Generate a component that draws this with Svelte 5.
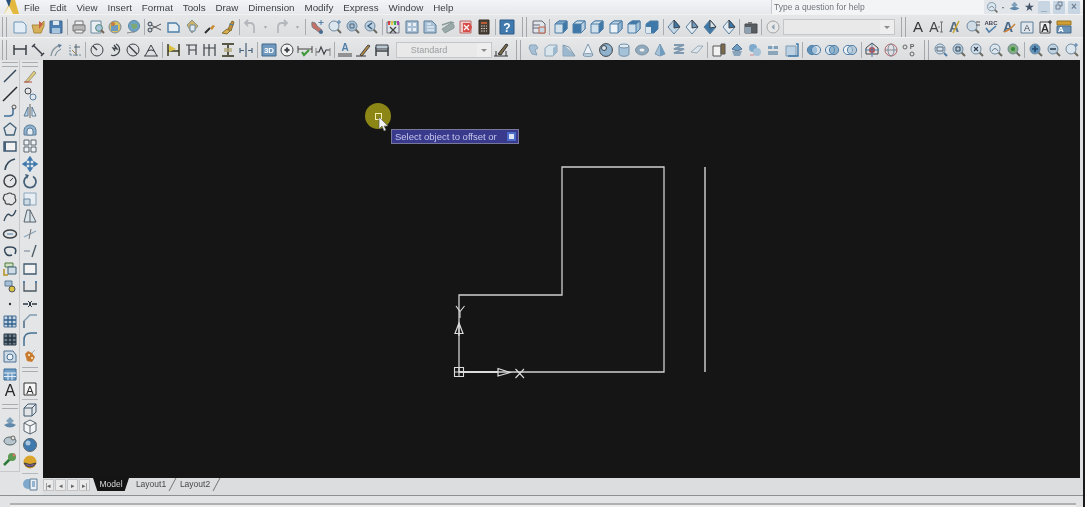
<script>
  const ink = '#3d4248';
  const blue = '#4f7fa8';

  // small builders for the families of look-alike toolbar icons
  const mag = (fill, extra = '') =>
    `<path d="M10.5 10.5 14 14" stroke="#6b6b60" stroke-width="2"/><circle cx="7" cy="7" r="5" fill="${fill}" stroke="#6f8aa0"/>${extra}`;
  const cube = (top, front, side) =>
    `<path d="M2 5 6 2h8v8l-4 4H2z" fill="${front}" stroke="${blue}"/><path d="M2 5 6 2h8l-4 3z" fill="${top}" stroke="${blue}"/><path d="M10 5h0l4-3v8l-4 4z" fill="${side}" stroke="${blue}"/>`;
  const gem = (a, b) =>
    `<path d="M8 1 14 8 8 15 2 8z" fill="${a}" stroke="#5e7f9c"/><path d="M8 1 14 8 8 9z" fill="${b}"/>`;
  const ring = (a, b) =>
    `<circle cx="6" cy="8" r="4.6" fill="${a}" stroke="${blue}"/><circle cx="10" cy="8" r="4.6" fill="${b}" fill-opacity=".6" stroke="${blue}"/>`;
  const text = (s, size, color = ink, weight = 400, x = 8, y = 13) =>
    `<text x="${x}" y="${y}" text-anchor="middle" font-family="Liberation Sans,sans-serif" font-size="${size}" font-weight="${weight}" fill="${color}" stroke="none">${s}</text>`;

  const icons = {
    new: `<path d="M2 3h9l3 3v8H2z" fill="#e3edf5" stroke="#6f97b8"/>`,
    qnew: `<path d="M2 6h8l4-4v5l-3 7H4z" fill="#d6b05a" stroke="#a98a3c"/><path d="M9 2l4 3-4 5z" fill="#c95f45" stroke="none"/>`,
    save: `<path d="M2 2h12v12H2z" fill="#4d7fb2" stroke="#3e658c"/><path d="M5 2h6v4H5z" fill="#dfe8ef" stroke="none"/><path d="M4 9h8v5H4z" fill="#a8c4dc" stroke="none"/>`,
    plot: `<path d="M4 2h8v4H4z" fill="#eee" stroke="#777"/><path d="M2 6h12v6H2z" fill="#b9b9b9" stroke="#777"/><path d="M4 11h8v3H4z" fill="#eee" stroke="#777"/>`,
    preview: `<path d="M2 2h10v12H2z" fill="#e8eef3" stroke="#6f8aa0"/><circle cx="10" cy="9" r="3.4" fill="#a8c7de" stroke="#587"/><path d="m12 11 3 3" stroke="#765" stroke-width="2"/>`,
    publish: `<circle cx="8" cy="8" r="6" fill="#d7c060" stroke="#7c8b9a"/><path d="M4 6h7v6H4z" fill="#6f9ac0" stroke="none"/><circle cx="6" cy="5" r="2" fill="#c67c3c" stroke="none"/>`,
    dwf: `<circle cx="9" cy="7" r="5.5" fill="#6fa4c9" stroke="#5a87a6"/><path d="M6 4q3 2 6 0v5q-3 2-5 0z" fill="#7fa871" stroke="none"/><path d="M2 14q4-1 8-1" stroke="#888"/>`,
    cut: `<path d="M2 5 14 11M2 11 14 5" stroke="#555"/><circle cx="3" cy="5" r="2" fill="#c9d5df" stroke="${ink}"/><circle cx="3" cy="11" r="2" fill="#c9d5df" stroke="${ink}"/>`,
    copy: `<path d="M2 4h8l3 3v6H2z" fill="#e6eef4" stroke="${blue}" stroke-width="1.4"/>`,
    paste: `<path d="M3 6 8 1l6 6-6 7z" fill="#cfb36a" stroke="#86968e"/><path d="M6 6h5v6H6z" fill="#dfe8ef" stroke="#6f8aa0"/>`,
    match: `<path d="M3 14 8 9" stroke="#2f2f2f" stroke-width="2"/><path d="M8 9l3-3 2 1-3 4z" fill="#c98a2c" stroke="none"/>`,
    brush: `<path d="M2 14l5-4 3 2-3 3z" fill="#d9b04d" stroke="#86702f"/><path d="M8 10l4-8 2 1-3 9z" fill="#c58f3a" stroke="#86702f"/><path d="M9 5l5 1" stroke="#4f7fa8"/>`,
    undo: `<path d="M12 14V8q0-4-4-4H4M6 1 3 4l3 3" stroke="#b4b8bc" stroke-width="1.8"/>`,
    redo: `<path d="M4 14V8q0-4 4-4h4M10 1l3 3-3 3" stroke="#b4b8bc" stroke-width="1.8"/>`,
    dd: `<path d="M6 7h4L8 10z" fill="#a0a4a8" stroke="none"/>`,
    pan: `<path d="M3 3q4 0 5 4l5 4-2 3-5-4q-4-1-3-7z" fill="#c66f66" stroke="#7d7d85"/><path d="M12 1v5M9.500 3.500h5" stroke="#4f7fa8"/><circle cx="12" cy="13" r="2" fill="#456c92" stroke="none"/>`,
    zrt: mag('#dbe6ee', `<path d="M12 1v4M10 3h4" stroke="#4f7fa8"/>`),
    zw: mag('#a9c3d8', `<path d="M5 5h4v4H5z" stroke="#567"/>`),
    zp: mag('#bcd0e0', `<path d="M9 4 5 7l4 3" stroke="#3b5e7d" stroke-width="1.4"/>`),
    props: `<path d="M2 3h12v11H2z" fill="#dde5ea" stroke="#778"/><path d="M3 2h2v4H3z" fill="#c44" stroke="none"/><path d="M6 2h2v4H6z" fill="#dc4" stroke="none"/><path d="M9 2h2v4H9z" fill="#4a4" stroke="none"/><path d="M12 2h2v4h-2z" fill="#a4a" stroke="none"/><path d="M5 8l6 6M11 8l-6 6" stroke="#444" stroke-width="1.3"/>`,
    dc: `<path d="M2 2h12v12H2z" fill="#a9c0d4" stroke="#5d7d98"/><path d="M4 4h3v3H4zM9 4h3v3H9zM4 9h3v3H4zM9 9h3v3H9z" fill="#e9eff4" stroke="none"/>`,
    tool: `<path d="M2 2h8l4 4v8H2z" fill="#a8c0d6" stroke="#5d7d98"/><path d="M5 5h4M5 8h7M5 11h7" stroke="#fff"/>`,
    sheet: `<path d="M2 10 11 4l3 2v3l-9 5z" fill="#9aa8a8" stroke="#8a9a9a"/><path d="M2 6l9-3 3 1" stroke="#8a9a9a" stroke-width="1.5"/>`,
    mkup: `<path d="M2 2h11v12H2z" fill="#ecc" stroke="#b66"/><path d="M5 4h7l2 4-2 5H5z" fill="#d64c48" stroke="none"/><path d="M6 6l5 5M11 6l-5 5" stroke="#fff" stroke-width="1.2"/>`,
    calc: `<path d="M3 1h10v14H3z" fill="#4a4036" stroke="#332a22"/><path d="M5 3h6v2H5z" fill="#b85c35" stroke="none"/><path d="M5 7h6M5 9.500h6M5 12h6" stroke="#ccc" stroke-dasharray="1.500 1"/>`,
    help: `<path d="M1 1h14v14H1z" fill="#3f79ad" stroke="#2f5d88"/>${text('?', 12, '#fff', 700)}`,
    named: `<path d="M2 2h9l3 3v9H2z" fill="#e0e6ea" stroke="#667"/><path d="M2 6h7M2 9h12" stroke="#667"/><path d="M8 8h6v6H8z" fill="#c4d5e3" stroke="#c06040"/>`,
    v1: cube('#7aa6c9', '#d4e2ec', '#3e78a8'),
    v2: cube('#d4e2ec', '#3e78a8', '#bcd2e2'),
    v3: cube('#d4e2ec', '#cfe0ec', '#3e78a8'),
    v4: cube('#bcd2e2', '#eef3f7', '#8fb2ce'),
    v5: cube('#3e78a8', '#cfe0ec', '#a3c1d8'),
    v6: `<path d="M2 5 6 2h8v8l-4 4H2z" fill="#3e78a8" stroke="${blue}"/><path d="M2 8h5v6H2z" fill="#dce7ef" stroke="none"/>`,
    g1: gem('#c4d7e6', '#3e78a8'),
    g2: gem('#e2ebf2', '#6f9dc2'),
    g3: gem('#3e78a8', '#d4e2ec'),
    g4: gem('#e2ebf2', '#3e78a8'),
    cam: `<path d="M2 5h12v9H2z" fill="#585c60" stroke="#484c50"/><path d="M2 8h6v6H2z" fill="#8ea2b2" stroke="none"/><path d="M5 3h4v2H5z" fill="#777" stroke="none"/>`,
    circ: `<circle cx="8" cy="8" r="6" fill="#e8e8e8" stroke="#a5a5a5"/><path d="M9.500 5 6.500 8l3 3z" fill="#8ca2b4" stroke="none"/>`,
    tA: text('A', 15, '#33363a'),
    tAi: `${text('A', 14, '#444', 400, 6)}<path d="M12 3h3M13.500 3v10M12 13h3M10 8h2" stroke="#777"/>`,
    tAm: `${text('A', 14, '#5b6f83', 700, 7)}<path d="M12 2 6 14" stroke="#c9a52e" stroke-width="1.6"/>`,
    tfind: mag('#cfdbe5', `<path d="M11 3h4M11 6h4" stroke="#555"/>`),
    tabc: `${text('ABC', 6, '#445', 700, 8, 6)}<path d="m3 9 3 4 7-6" stroke="#4f7fa8" stroke-width="1.6"/>`,
    tsty: `${text('A', 14, '#46698a', 700, 7)}<path d="M3 13q6-2 11-8" stroke="#c9813a" stroke-width="1.4"/>`,
    tbox: `<path d="M2 3h12v11H2z" fill="#dfe7ed" stroke="#5d7d98"/>${text('A', 9, '#445', 400, 8, 12)}`,
    tboxb: `<path d="M2 3h10v11H2z" fill="#eef2f5" stroke="#444"/>${text('A', 11, '#333', 700, 7, 13)}<path d="M12 1v4M10 3h4" stroke="#333"/>`,
    tlay: `<path d="M1 2h14v4H1z" fill="#cf9f36" stroke="#9a7620"/><path d="M1 7h14v7H1z" fill="#6b93b7" stroke="#486d8d"/>${text('A', 8, '#fff', 700, 5, 13)}`,
    dlin: `<path d="M2 3v10M14 3v10M2 7h12" stroke-width="1.5"/>`,
    dali: `<path d="M2 5l3-3M11 14l3-3M4 4l8 8" stroke-width="1.5"/>`,
    darc: `<path d="M3 14Q4 6 12 3" stroke="#8a98a2" stroke-width="1.4"/><path d="M7 14Q8 9 13 7" stroke="#6f8696"/><path d="M10 2l4 1-3 3z" fill="#5d7d98" stroke="none"/>`,
    dord: `<path d="M3 13h11M3 13V3" stroke="#6f8aa0" stroke-dasharray="2 1"/><path d="M7 5h6M9 2v12" stroke="#54636e"/><path d="M5 8l4 4" stroke="#a5864a"/>`,
    drad: `<circle cx="8" cy="8" r="6"/><path d="M8 8 4 4" stroke-width="1.4"/>`,
    djog: `<path d="M9 2a6 6 0 1 1-5 11" stroke-width="1.3"/><path d="M8 9 6 6l4 1-3-4" stroke-width="1.3"/>`,
    ddia: `<circle cx="8" cy="8" r="6"/><path d="M4 4l8 8" stroke-width="1.4"/>`,
    dang: `<path d="M1 14h14M2 14 8 3l6 11"/><path d="M5 9q3-2 6 0" stroke-width="1.2"/>`,
    dqk: `<path d="M2 2v12M13 2v12M2 9h11" stroke="#3d3a22" stroke-width="1.5"/><path d="M3 3l7 4-7 3z" fill="#d9c242" stroke="none"/>`,
    dbase: `<path d="M2 3h11M5 3v10M12 3v10M5 8h7" stroke-width="1.2"/>`,
    dcont: `<path d="M2 2v12M7 2v12M13 2v12M2 6h11" stroke-width="1.2"/>`,
    dtol: `<path d="M2 2h12M2 14h12M8 2v12" stroke="#5b5948" stroke-width="2"/><path d="M4 7h8M4 9h8" stroke="#b5ac7e" stroke-width="1.500"/>`,
    dcen: `<path d="M8 1v14M2 6v5M14 6v5M2 8.500h4M10 8.500h4" stroke="#46627a" stroke-width="1.2"/>`,
    d3: `<path d="M1 2h14v12H1z" fill="#6f99be" stroke="#41688a"/>${text('3D', 8, '#fff', 700, 8, 11)}`,
    dins: `<circle cx="8" cy="8" r="6" fill="#f2f2f2"/><circle cx="8" cy="8" r="1.500" fill="${ink}"/><path d="M8 5v6M5 8h6"/>`,
    dchk: `<path d="M1 4v7M15 4v7M1 7h14" stroke="#444"/><path d="M5 10l2 3 5-5" stroke="#3f9a3a" stroke-width="2.2"/>`,
    djl: `<path d="M1 10h3l2-5 3 7 2-4h4" stroke-width="1.2"/><path d="M1 6v8M15 6v8" stroke="#888"/>`,
    dA: `${text('A', 10, '#4f7fa8', 700, 8, 9)}<path d="M1 12h14M1 14h14" stroke="#444"/>`,
    dedit: `<path d="M1 14h10" stroke="#333"/><path d="M5 13 13 3l2 1-8 10z" fill="#b88c42" stroke="#444"/>`,
    dupd: `<path d="M2 5v9M14 5v9M2 9h12" stroke-width="1.5"/><path d="M2 3h12v4H2z" fill="#bbc8d2"/>`,
    dsty: `<path d="M1 14h14M3 14V9M13 14V9" stroke="#333"/><path d="M5 12 13 2l2 1-7 10z" fill="#7a6a48" stroke="#333"/>`,
    sx: `<path d="M5 3h6l2 3-3 2 2 5-5-1-3-6z" fill="#a8c0d6" stroke="#88a3ba"/>`,
    sbox: `<path d="M2 6 6 3h8v7l-4 4H2z" fill="#dbe5ec" stroke="#8ba6bc"/><path d="M10 6l4-3v7l-4 4z" fill="#9db9d0" stroke="none"/>`,
    swe: `<path d="M2 3v11h12z" fill="#9db9d0" stroke="#8ba6bc"/><path d="M2 3l6 2 6 9" fill="none" stroke="#7f9ab0"/>`,
    scon: `<path d="M8 2 3 13h10z" fill="#eef2f6" stroke="#7f9ab0"/><ellipse cx="8" cy="13" rx="5" ry="1.500" fill="#c4d5e3" stroke="#7f9ab0"/>`,
    ssph: `<circle cx="8" cy="8" r="6.400" fill="#8fb2ce"/><circle cx="6" cy="6" r="2.500" fill="#d6e4ef"/>`,
    scyl: `<path d="M3 4v8c0 3 10 3 10 0V4" fill="#a6c2d8" stroke="#6f8ea8"/><ellipse cx="8" cy="4" rx="5" ry="2" fill="#e2ebf2" stroke="#6f8ea8"/>`,
    stor: `<ellipse cx="8" cy="8" rx="6.500" ry="5" fill="#8fa8bc" stroke="#7f96a8"/><ellipse cx="8" cy="8" rx="2.500" ry="1.500" fill="#eee" stroke="none"/>`,
    spyr: `<path d="M8 2 13 12 8 14 3 12z" fill="#a6c2d8" stroke="#7f9ab0"/><path d="M8 2v12l5-2z" fill="#6f9dc2" stroke="none"/>`,
    shel: `<path d="M3 3h10L3 7h10L3 11h10" stroke="#7f9ab0" stroke-width="1.800"/>`,
    spln: `<path d="M2 10 9 4h5l-6 7z" fill="#dde5ea" stroke="#9aacba"/>`,
    sslc: `<path d="M2 4h8v10H2z" fill="#f2f2f2" stroke="#555"/><path d="M10 2h4v10h-4z" fill="#7c6a4a" stroke="#555"/>`,
    sint: `<path d="M8 2 13 7 8 9 3 7z" fill="#6f9dc2" stroke="#4d7194"/><path d="M3 9h10l-2 5H5z" fill="#8aa4ba" stroke="none"/>`,
    sspl: `<circle cx="6" cy="6" r="4" fill="#7fa9cc" stroke="none"/><circle cx="10" cy="10" r="4" fill="#a6c2d8" stroke="none"/><path d="M3 13h4" stroke="#c88"/>`,
    srev: `<path d="M3 4h10v3H3z" fill="#7fa0ba" stroke="none"/><path d="M3 9h10v4H3z" fill="#8aa4ba" stroke="none"/><path d="M8 2v5" stroke="#fff"/>`,
    sshl: `<path d="M2 4h10v10H2z" fill="#bcd2e2" stroke="#7f9ab0"/><path d="M12 2h2v12H4" stroke="#3e78a8" stroke-width="1.4"/>`,
    vw: `<path d="M8 1 14 6v6H2V6z" stroke="#444"/><circle cx="8" cy="8" r="3" fill="#c44" stroke="none"/><path d="M8 1v14M1 8h14" stroke="#4f7fa8"/>`,
    orb: `<circle cx="8" cy="8" r="6" stroke="#b46060"/><ellipse cx="8" cy="8" rx="3" ry="6" stroke="#7f8a9a"/><path d="M2 8h12" stroke="#7f8a9a"/>`,
    ucsp: `<circle cx="4" cy="5" r="2" stroke="#666"/><circle cx="11" cy="12" r="2" stroke="#666"/>${text('P', 7, '#666', 700, 11, 7)}`,
    pan2: `<circle cx="7" cy="7" r="5" fill="#d6e2eb" stroke="#6f8aa0"/><path d="M4 5h6v4H4z" stroke="#567"/><path d="m11 11 3 3" stroke="#4f7fa8" stroke-width="2"/>`,
    zin: mag('#5f92bb', `<path d="M7 4v6M4 7h6" stroke="#234c70" stroke-width="1.6"/>`),
    zout: mag('#bcd0e0', `<path d="M4 7h6" stroke="#345" stroke-width="1.6"/>`),
    zgo: mag('#86ad7c', `<circle cx="7" cy="7" r="2" fill="#2f8a3a" stroke="none"/>`),
    zx: mag('#d6e2eb', `<path d="M5 5l4 4M9 5l-4 4" stroke="#345" stroke-width="1.3"/>`),
    zw2: mag('#b3c8d9', `<path d="M5 5h4v4H5z" stroke="#345"/>`),
    zpl: mag('#dce6ee', `<path d="M4 9q3-5 6 0" stroke="#678"/>`),
    line: `<path d="M2 14 14 2" stroke="#33475a" stroke-width="1.400"/>`,
    xline: `<path d="M1 15 15 1" stroke="#22262a" stroke-width="1.500"/>`,
    pline: `<path d="M2 13h5q4 0 4-3V5" stroke="#3f6f9a" stroke-width="1.500"/><circle cx="12" cy="4" r="2" stroke="#555"/>`,
    poly: `<path d="M8 2 14 7 12 14H4L2 7z" stroke="#3f6078" stroke-width="1.300"/>`,
    rect: `<path d="M2 4h12v9H2z" fill="#f2f2f2" stroke="#3f5a70" stroke-width="1.400"/><path d="M2 4h2v9H2z" fill="#46627a" stroke="none"/>`,
    arc: `<path d="M3 14Q4 5 13 3" stroke="#33475a" stroke-width="1.600"/>`,
    circle: `<circle cx="8" cy="8" r="6" stroke-width="1.500"/><path d="M8 8l3-3"/>`,
    cloud: `<path d="M5 3q3-2 5 0 4 0 3 4 2 3-1 5-2 3-5 1-4 1-4-3-3-2-1-5 0-2 3-2z" stroke-width="1.200"/>`,
    spline: `<path d="M2 13q3-9 6-6t6-5" stroke="#33475a" stroke-width="1.300"/>`,
    ell: `<ellipse cx="8" cy="8" rx="6.500" ry="4" stroke-width="1.500"/><path d="M5 8h6" stroke="#4f7fa8"/>`,
    earc: `<path d="M13 11Q16 4 8 4 1 4 3 9t7 3" stroke="#33475a" stroke-width="1.500"/>`,
    insert: `<path d="M3 2h8v4H3z" fill="#cfe0c4" stroke="#4f7a3c"/><path d="M6 6h8v7H6z" fill="#cfdce6" stroke="#3f6078"/><path d="M2 8v6h4" stroke="#b49020" stroke-width="1.500"/>`,
    block: `<path d="M3 3h7v5H3z" fill="#a8c0d6" stroke="#5d7d98"/><circle cx="10" cy="11" r="3" fill="#d9c242" stroke="#555"/>`,
    dot: `<circle cx="8" cy="8" r="1.200" fill="#333" stroke="none"/>`,
    hatch: `<path d="M2 3h12v11H2z" fill="#c3d5e4" stroke="#4d7194"/><path d="M2 7h12M2 11h12M6 3v11M10 3v11" stroke="#2f5d88" stroke-width="1.300"/>`,
    grad: `<path d="M2 3h12v11H2z" fill="#6a7e8e" stroke="#2c3a46"/><path d="M2 7h12M2 11h12M6 3v11M10 3v11" stroke="#26333e" stroke-width="1.500"/>`,
    region: `<path d="M2 3h9l3 4v7H2z" fill="#cddbe6" stroke="#4d7194"/><circle cx="8" cy="9" r="3" fill="#eef3f7" stroke="#4d7194"/>`,
    table: `<path d="M2 3h12v11H2z" fill="#6f9dc6" stroke="#3f6f9a"/><path d="M2 7h12M2 10.500h12M6 7v7M10 7v7" stroke="#e3edf5"/>`,
    mtext: text('A', 16, '#26282a'),
    erase: `<path d="M3 14 12 3l2 2-8 9z" fill="#e0c878" stroke="#9a9a80"/><path d="M2 14h8" stroke="#b04a3a"/>`,
    ccopy: `<circle cx="6" cy="5" r="3"/><circle cx="11" cy="11" r="3" stroke="#4f7fa8"/><path d="M8 7l1 2" stroke="#888"/>`,
    mirror: `<path d="M8 1v14" stroke="#777" stroke-width="1.200"/><path d="M6 4v9H2z" fill="#b9cfe2" stroke="#5d7d98"/><path d="M10 4v9h4z" fill="#e6eef4" stroke="#5d7d98"/>`,
    offset: `<path d="M2 14V9q1-5 6-5t6 5v5z" fill="#8fb2ce" stroke="#5d7d98"/><path d="M5 14V10q0-3 3-3t3 3v4z" fill="#e6eef4" stroke="#5d7d98"/>`,
    array: `<path d="M2 2h5v5H2zM9 2h5v5H9zM2 9h5v5H2zM9 9h5v5H9z" fill="#eef2f5" stroke="#5b6770"/>`,
    move: `<path d="M8 1v14M1 8h14M8 1 6 4h4zM8 15l-2-3h4zM1 8l3-2v4zM15 8l-3-2v4z" fill="#3f79ad" stroke="#3f79ad" stroke-width="1.400"/>`,
    rotate: `<path d="M5 3.500a6 6 0 1 0 6 0" stroke="#46627a" stroke-width="1.800"/><path d="M3 1l4 1-2 4z" fill="#46627a" stroke="none"/>`,
    scale: `<path d="M2 2h12v12H2z" fill="#e6eef4" stroke="#8ba6bc"/><path d="M2 8h6v6H2z" fill="#cddbe6" stroke="#6f8aa0"/>`,
    stretch: `<path d="M2 14 5 2h3l6 12z" fill="#dbe5ec" stroke="#55606a"/><path d="M8 2v12" stroke="#55606a"/>`,
    trim: `<path d="M2 11 14 5" stroke="#8ba6bc" stroke-width="1.300"/><path d="M9 3 7 13" stroke="#777"/>`,
    extend: `<path d="M2 8h6" stroke="#8b9aa6" stroke-width="1.300"/><path d="M14 2 10 14" stroke="#4a5862" stroke-width="1.300"/>`,
    brkpt: `<path d="M2 3h12v10H2z" fill="#f2f2f2" stroke="#3f5a70" stroke-width="1.300"/>`,
    brk: `<path d="M2 5v8h12V5" stroke="#4a5862" stroke-width="1.300"/><path d="M1 4h2M13 4h2" stroke="#4f7fa8" stroke-width="2"/>`,
    join: `<path d="M1 8h5M10 8h5" stroke="#2f3a44" stroke-width="1.500"/><path d="M6 5l3 3-3 3M10 5 7 8l3 3" stroke="#2f3a44"/>`,
    chamf: `<path d="M2 15V8l6-6h7" stroke="#7f9ab0" stroke-width="1.400"/><path d="M2 15V8" stroke="#46627a"/>`,
    fillet: `<path d="M2 15V9q0-7 7-7h6" stroke="#46708f" stroke-width="1.500"/>`,
    explode: `<path d="M3 6l3-3 4 2 3 4-3 5-5-1z" fill="#c87a2e" stroke="none"/><path d="M6 6h2v2H6zM9 9h2v2H9z" fill="#efd9b0" stroke="none"/><path d="M13 2l-3 3" stroke="#aaa"/>`,
    atbox: `<path d="M2 2h12v12H2z" fill="#f6f6f6" stroke="#333"/>${text('A', 11, '#333', 400, 8, 13)}`,
    box3: `<path d="M2 6 6 2h8v8l-4 4H2z" fill="none" stroke="#3f5a70"/><path d="M2 6h8v8M10 6l4-4" stroke="#3f5a70"/>`,
    hex3: `<path d="M8 1 14 4v8l-6 3-6-3V4z" fill="#f2f4f6" stroke="#5b6770"/><path d="M2 4l6 3 6-3M8 7v8" stroke="#5b6770"/>`,
    sph3: `<circle cx="8" cy="8" r="6.500" fill="#3f79ad" stroke="#5b6770"/><circle cx="6" cy="6" r="2.500" fill="#a8c7de" stroke="none"/>`,
    sun: `<circle cx="8" cy="8" r="6.500" fill="#d9a52c" stroke="none"/><path d="M2 9a6.500 6.500 0 0 0 12 0q-6 3-12 0z" fill="#7a5aa0"/>`,
    nav: `<path d="M8 1 12 5 8 8 4 5z" fill="#7fa0ba" stroke="none"/><path d="M2 9q6-4 12 0-6 5-12 0z" fill="#5f88aa" stroke="none"/>`,
    ren: `<ellipse cx="8" cy="8" rx="6" ry="4" fill="#b7c4ce" stroke="#566"/><circle cx="11" cy="5" r="2" fill="#e4e4e4" stroke="#666"/>`,
    mat: `<path d="M2 14 8 8" stroke="#2f7a3a" stroke-width="2.500"/><circle cx="10" cy="6" r="4" fill="#5a9a52" stroke="none"/><circle cx="12" cy="4" r="1.500" fill="#c76" stroke="none"/>`,
    sset: `<circle cx="6" cy="8" r="5" fill="#7fa9cc" stroke="none"/><path d="M8 3h7v11H8z" fill="#e8eef3" stroke="#5d7d98"/><path d="M10 6h3M10 8h3M10 10h3" stroke="#3f79ad"/>`,
    ring1: ring('#5f92bb', '#cfe0ec'),
    ring2: ring('#dbe5ec', '#5f92bb'),
    ring3: ring('#eef2f5', '#9db9d0')
  };

  const row1 = 'new qnew save | plot preview publish dwf | cut copy paste match brush | undo :dd redo :dd | pan zrt zw zp | props dc tool sheet mkup calc | help GRIP named | v1 v2 v3 v4 v5 v6 | g1 g2 g3 g4 | cam | circ COMBO GRIP tA tAi tAm tfind tabc tsty tbox tboxb tlay'.split(' ');
  const row2 = 'dlin dali darc dord | drad djog ddia dang | dqk dbase dcont dtol dcen | d3 dins dchk djl | dA dedit dupd STYLE dsty GRIP sx sbox swe scon ssph scyl stor spyr shel spln | sslc sint sspl srev sshl | ring1 ring2 ring3 | vw orb ucsp GRIP pan2 zw2 zx zpl zgo | zin zout zrt'.split(' ');

  const menus = ['File', 'Edit', 'View', 'Insert', 'Format', 'Tools', 'Draw', 'Dimension', 'Modify', 'Express', 'Window', 'Help'];
  const leftA = 'line xline pline poly rect arc circle cloud spline ell earc insert block dot hatch grad region table mtext'.split(' ');
  const leftB = 'erase ccopy mirror offset array move rotate scale stretch trim extend brkpt brk join chamf fillet explode'.split(' ');
  const leftC = 'nav ren mat'.split(' ');
  const leftD = 'box3 hex3 sph3 sun'.split(' ');

  const svg = (name) =>
    `<svg width="16" height="16" viewBox="0 0 16 16" fill="none" stroke="${ink}">${icons[name] ?? ''}</svg>`;
</script>

{#snippet bar(items)}
  {#each items as it}
    {#if it === '|'}
      <i class="sep"></i>
    {:else if it === 'GRIP'}
      <i class="grip wide"></i>
    {:else if it === 'COMBO'}
      <span class="combo layer"><b></b></span>
    {:else if it === 'STYLE'}
      <span class="combo style">Standard<b></b></span>
    {:else if it === ':dd'}
      <span class="dd">{@html svg('dd')}</span>
    {:else}
      <span class="ic">{@html svg(it)}</span>
    {/if}
  {/each}
{/snippet}

<div class="app">
  <header class="menubar">
    <svg class="logo" width="18" height="14" viewBox="0 0 18 14">
      <path d="M9 0h4l4 14H2z" fill="#e3b83e" />
      <path d="M4 0h5L7 7z" fill="#28527c" />
      <path d="M2 14 7 6l4 8z" fill="#f4f0e0" />
    </svg>
    <nav class="menus">
      {#each menus as m}<span>{m}</span>{/each}
    </nav>
    <div class="help">Type a question for help</div>
    <div class="infotools">
      <span class="ic sm">{@html svg('zpl')}</span>
      <span class="dot">·</span>
      <span class="ic sm">{@html svg('nav')}</span>
      <span class="star">★</span>
    </div>
    <div class="winbtns">
      <span>_</span>
      <span>
        <svg width="8" height="9" viewBox="0 0 8 9" fill="none" stroke="#6d7f93">
          <path d="M1 4h4v4H1zM3 3V1h4v4H5" />
        </svg>
      </span>
      <span>×</span>
    </div>
  </header>

  <div class="tbrow"><i class="grip"></i>{@render bar(row1)}</div>
  <div class="tbrow"><i class="grip"></i>{@render bar(row2)}</div>

  <main class="work">
    <aside class="side">
      <div class="cols">
        <div class="col">
          <div class="hgrip"></div>
          {#each leftA as n}<span class="ic v">{@html svg(n)}</span>{/each}
          <div class="hgrip lower"></div>
          {#each leftC as n}<span class="ic v">{@html svg(n)}</span>{/each}
        </div>
        <div class="col second">
          <div class="hgrip"></div>
          {#each leftB as n}<span class="ic v">{@html svg(n)}</span>{/each}
          <div class="hgrip"></div>
          <span class="ic v spaced">{@html svg('atbox')}</span>
          <hr class="tight" />
          {#each leftD as n}<span class="ic v">{@html svg(n)}</span>{/each}
          <hr class="last" />
          <span class="ic v">{@html svg('sset')}</span>
        </div>
      </div>
    </aside>

    <div class="right">
      <section class="canvas">
        <svg class="drawing" width="1037" height="418" viewBox="43 60 1037 418" fill="none" stroke="#dcdcdc">
          <path d="M459 372H664V167H562V295H459Z" stroke="#cfcfcf" stroke-width="1.300" />
          <path d="M705 167V372" stroke="#e4e4e4" stroke-width="1.300" />
          <path d="M459 372H498" stroke="#f0f0f0" stroke-width="1.600" />
          <path d="M454.500 367.500h9v9h-9zM459 367.500v9M454.500 372h9" stroke-width="1.100" />
          <path d="M498 368.500 510 372.500l-12 3.500z" stroke-width="1.200" />
          <path d="M515.500 369 524 378M524 369l-8.500 9" stroke-width="1.100" />
          <path d="M459 336 459 324M455 333.500 459 323l4 10.500z" stroke-width="1.200" />
          <path d="M456 306 460 311.500 464.500 306M460 311.500V318" stroke-width="1.100" />
        </svg>

        <div class="halo"><i></i></div>
        <svg class="cursor" width="11" height="16" viewBox="0 0 11 16">
          <path d="M1 1v12l3-3 2 5 2-1-2-4h4z" fill="#f4f4f4" stroke="#555" stroke-width=".6" />
        </svg>
        <div class="tip">Select object to offset or<span class="tipbtn"></span></div>
      </section>

      <div class="tabbar">
        <div class="tabnav">
          <span>|◂</span><span>◂</span><span>▸</span><span>▸|</span>
        </div>
        <div class="tab active">Model</div>
        <div class="tab">Layout1</div>
        <div class="tab">Layout2</div>
      </div>
    </div>
  </main>

  <footer class="cmd"><div class="cmdline"></div></footer>
</div>

<style>
  :global(body) {
    margin: 0;
    background: #dedede;
    overflow: hidden;
  }
  .app {
    width: 1083px;
    height: 507px;
    display: flex;
    flex-direction: column;
    font-family: "Liberation Sans", Arial, sans-serif;
    color: #3c3f44;
    background: #dedfe0;
    border-right: 2px solid #1a1a1a;
    overflow: hidden;
    filter: blur(0.6px);
  }

  .menubar {
    height: 14px;
    flex: none;
    display: flex;
    align-items: center;
    background: linear-gradient(#f2f4f7, #e6e8eb);
    font-size: 9.8px;
  }
  .logo {
    margin-left: 2px;
    flex: none;
  }
  .menus {
    display: flex;
    gap: 9.9px;
    margin-left: 4px;
  }
  .help {
    margin-left: auto;
    width: 210px;
    height: 14px;
    padding-left: 2px;
    line-height: 14px;
    font-size: 8.5px;
    color: #70747a;
    background: #f3f4f6;
    border-left: 1px solid #c9cbce;
  }
  .infotools {
    display: flex;
    align-items: center;
    height: 14px;
    width: 53px;
    padding-left: 1px;
    background: #e2e6ea;
    font-size: 12px;
  }
  .ic.sm {
    width: 14px;
    height: 14px;
  }
  .ic.sm :global(svg) {
    width: 13px;
    height: 13px;
  }
  .dot {
    width: 8px;
    text-align: center;
  }
  .star {
    margin-left: 3px;
    color: #44536a;
    font-size: 12px;
  }
  .winbtns {
    display: flex;
    gap: 3px;
    width: 45px;
  }
  .winbtns span {
    width: 12px;
    height: 13px;
    line-height: 11px;
    text-align: center;
    font-size: 10px;
    font-weight: 700;
    color: #6d7f93;
    background: #c8d6e4;
    border-radius: 1px;
  }

  .tbrow {
    height: 23px;
    flex: none;
    display: flex;
    align-items: center;
    padding: 1px 0 0 2px;
    background: linear-gradient(#e6e7e9, #dcdddf);
    border-top: 1px solid #f2f2f2;
    box-sizing: border-box;
    overflow: hidden;
  }
  .ic {
    flex: none;
    width: 18.2px;
    height: 18px;
    display: flex;
    align-items: center;
    justify-content: center;
  }
  .dd {
    flex: none;
    width: 13px;
    display: flex;
    justify-content: center;
  }
  .sep {
    flex: none;
    width: 1px;
    height: 16px;
    margin: 0 1.5px;
    background: #a9adb1;
  }
  .grip {
    flex: none;
    width: 3px;
    height: 20px;
    margin-right: 4px;
    border-left: 1px solid #a4a8ac;
    border-right: 1px solid #a4a8ac;
  }
  .grip.wide {
    margin: 0 3px 0 6px;
  }
  .combo {
    flex: none;
    position: relative;
    box-sizing: border-box;
    height: 16px;
    line-height: 15px;
    font-size: 9px;
    color: #9a9c9e;
    background: #e9e9e9;
    border: 1px solid #c4c6c8;
  }
  .combo b {
    position: absolute;
    right: 0;
    top: 0;
    bottom: 0;
    width: 14px;
    background: #eee;
  }
  .combo b::after {
    content: "";
    position: absolute;
    left: 4px;
    top: 6px;
    border: 3px solid transparent;
    border-top-color: #8a8c8e;
  }
  .layer {
    width: 112px;
    margin-left: 1px;
  }
  .style {
    width: 96px;
    padding-left: 14px;
    margin: 0 0 0 5px;
  }

  .work {
    flex: 1;
    min-height: 0;
    display: flex;
  }
  .side {
    width: 43px;
    flex: none;
    background: #e2e3e4;
  }
  .cols {
    display: flex;
    height: 100%;
  }
  .col {
    width: 19px;
    align-self: flex-start;
    padding-bottom: 3px;
    display: flex;
    flex-direction: column;
    align-items: center;
    background: #e4e5e6;
    border-right: 1px solid #c6c8ca;
    border-bottom: 1px solid #c6c8ca;
  }
  .col.second {
    width: 20px;
    border: 0;
  }
  .hgrip {
    width: 16px;
    height: 3px;
    margin: 2px 0 0.5px;
    flex: none;
    border-top: 1px solid #a9adb1;
    border-bottom: 1px solid #a9adb1;
  }
  .hgrip.lower {
    margin: 4px 0 6px;
  }
  .ic.v {
    width: 18px;
    height: 17.5px;
  }
  .spaced {
    margin: 8px 0 0;
  }
  hr {
    width: 16px;
    margin: 3px 0;
    flex: none;
    border: 0;
    border-top: 1px solid #b6b9bc;
  }
  hr.tight {
    margin: 1px 0;
  }
  hr.last {
    margin: 1.5px 0;
  }

  .right {
    flex: 1;
    min-width: 0;
    display: flex;
    flex-direction: column;
  }
  .canvas {
    position: relative;
    height: 418px;
    flex: none;
    width: 1037px;
    background: #151515;
  }
  .drawing {
    position: absolute;
    inset: 0;
    display: block;
  }
  .halo {
    position: absolute;
    left: 322px;
    top: 43px;
    width: 26px;
    height: 26px;
    border-radius: 50%;
    background: #8b8615;
    display: flex;
    align-items: center;
    justify-content: center;
  }
  .halo i {
    width: 5px;
    height: 5px;
    border: 1px solid #f4eeb0;
  }
  .cursor {
    position: absolute;
    left: 335px;
    top: 56px;
  }
  .tip {
    position: absolute;
    left: 348px;
    top: 69px;
    width: 128px;
    height: 15px;
    box-sizing: border-box;
    padding-left: 3px;
    line-height: 13px;
    font-size: 9.5px;
    color: #c4c6ee;
    background: #3a3a8c;
    border: 1px solid #77779c;
  }
  .tipbtn {
    position: absolute;
    right: 2px;
    top: 2px;
    width: 9px;
    height: 9px;
    background: #dde4f6;
    border: 2px solid #4b6bc8;
    box-sizing: border-box;
  }

  .tabbar {
    flex: 1;
    display: flex;
    align-items: flex-start;
    background: #dcddde;
    font-size: 8.5px;
  }
  .tabnav {
    display: flex;
    gap: 1px;
    margin: 1px 0 0 0;
    width: 50px;
    flex: none;
  }
  .tabnav span {
    width: 11px;
    height: 12px;
    line-height: 11px;
    font-size: 7px;
    text-align: center;
    color: #666;
    background: #eaeaea;
    border: 1px solid #c2c4c6;
    box-sizing: border-box;
  }
  .tab {
    position: relative;
    width: 44px;
    height: 13px;
    line-height: 13px;
    text-align: center;
    color: #45484c;
  }
  .tab::after {
    content: "";
    position: absolute;
    right: 0;
    top: 0;
    bottom: 0;
    width: 1px;
    background: #777;
    transform: skewX(-28deg);
  }
  .tab.active {
    width: 36px;
    color: #d8d8d8;
    background: #141414;
    clip-path: polygon(0 0, 100% 0, 88% 100%, 12% 100%);
  }
  .tab.active::after {
    display: none;
  }

  .cmd {
    height: 12px;
    flex: none;
    box-sizing: border-box;
    padding: 0 7px 0 10px;
    background: #e2e3e4;
    border-top: 1px solid #8d9093;
  }
  .cmdline {
    height: 4px;
    margin-top: 7px;
    border-top: 2px solid #aeb0b2;
    background: #eeeeee;
  }
</style>
